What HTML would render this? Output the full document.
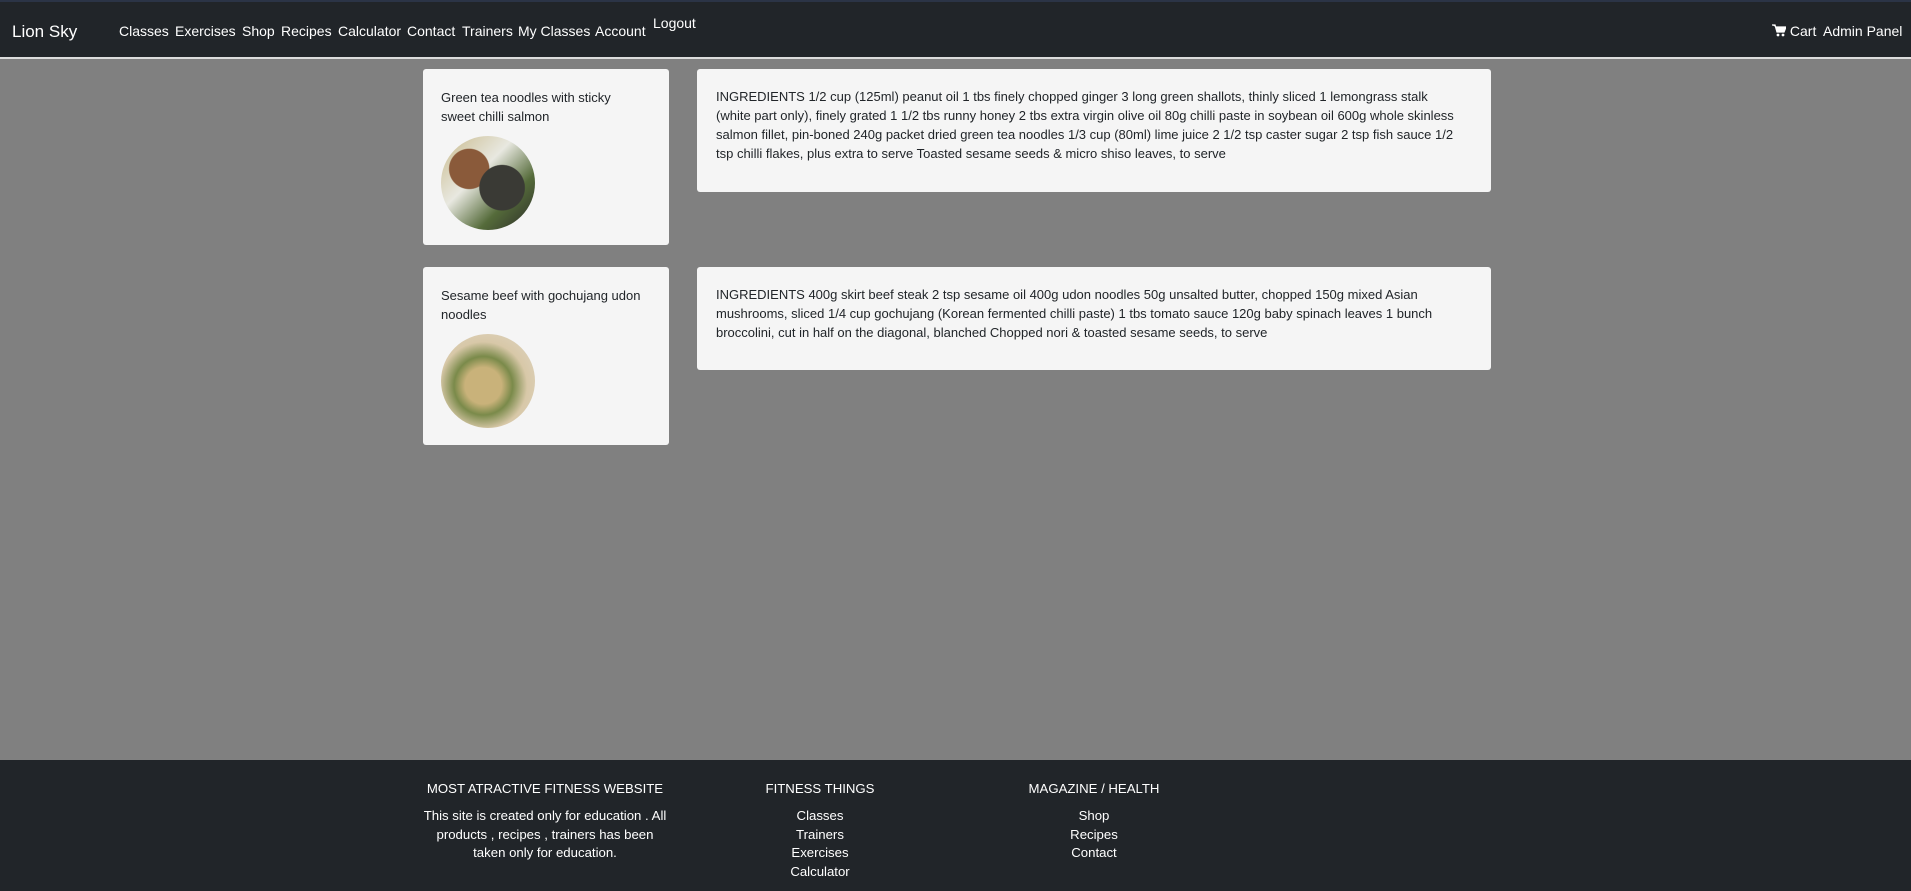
<!DOCTYPE html>
<html><head><meta charset="utf-8"><style>
*{box-sizing:border-box;margin:0;padding:0}
body{width:1911px;height:891px;overflow:hidden;background:#808080;font-family:"Liberation Sans",sans-serif;position:relative}
.nav{position:absolute;left:0;top:0;width:1911px;height:59px;background:#212529;border-top:2px solid #2b3446;border-bottom:2px solid #dcdcdc}
.nav a{position:absolute;color:#fff;font-size:14px;white-space:nowrap}
.card{position:absolute;background:#f5f5f5;border-radius:3px;font-size:13px;line-height:19px;color:#212529;white-space:nowrap}
.img{width:94px;height:94px;border-radius:50%;margin-top:10px}
.foot{position:absolute;left:0;top:760px;width:1911px;height:131px;background:#212529;color:#fff;font-size:13.2px;text-align:center}
.col{position:absolute;top:21px}
.col h5{font-weight:normal;font-size:13.2px;margin-bottom:11px}
.col p{line-height:18.5px}
</style></head><body>
<div class="nav">
<a style="left:12px;top:20px;font-size:17px">Lion Sky</a>
<a style="left:119px;top:21px">Classes</a>
<a style="left:175px;top:21px">Exercises</a>
<a style="left:242px;top:21px">Shop</a>
<a style="left:281px;top:21px">Recipes</a>
<a style="left:338px;top:21px">Calculator</a>
<a style="left:407px;top:21px">Contact</a>
<a style="left:462px;top:21px">Trainers</a>
<a style="left:518px;top:21px">My Classes</a>
<a style="left:595px;top:21px">Account</a>
<a style="left:653px;top:13px">Logout</a>
<a style="left:1772px;top:21px"><svg width="14" height="13" viewBox="0 0 14 13" style="vertical-align:-1px"><path d="M0 1h3l2 7h7l2-5H4" fill="#fff" stroke="#fff" stroke-width="1.3"/><circle cx="6" cy="11" r="1.4" fill="#fff"/><circle cx="11" cy="11" r="1.4" fill="#fff"/></svg> Cart</a>
<a style="left:1823px;top:21px">Admin Panel</a>
</div>

<div class="card" style="left:423px;top:69px;width:246px;height:176px;padding:19px 18px">Green tea noodles with sticky<br>sweet chilli salmon
<div class="img" style="background:radial-gradient(circle at 65% 55%,#3a3a35 0 28%,transparent 29%),radial-gradient(circle at 30% 35%,#8a5a3a 0 22%,transparent 23%),linear-gradient(135deg,#c8b98a,#e8e8e0 40%,#556b3a 70%,#2a2a28)"></div></div>
<div class="card" style="left:697px;top:69px;width:794px;height:123px;padding:18px 19px">INGREDIENTS 1/2 cup (125ml) peanut oil 1 tbs finely chopped ginger 3 long green shallots, thinly sliced 1 lemongrass stalk<br>(white part only), finely grated 1 1/2 tbs runny honey 2 tbs extra virgin olive oil 80g chilli paste in soybean oil 600g whole skinless<br>salmon fillet, pin-boned 240g packet dried green tea noodles 1/3 cup (80ml) lime juice 2 1/2 tsp caster sugar 2 tsp fish sauce 1/2<br>tsp chilli flakes, plus extra to serve Toasted sesame seeds &amp; micro shiso leaves, to serve</div>

<div class="card" style="left:423px;top:267px;width:246px;height:178px;padding:19px 18px">Sesame beef with gochujang udon<br>noodles
<div class="img" style="background:radial-gradient(circle at 45% 55%,#c9b27a 0 25%,#7a8a4a 40%,#d8c8a8 60%,#e0d8c8)"></div></div>
<div class="card" style="left:697px;top:267px;width:794px;height:103px;padding:18px 19px">INGREDIENTS 400g skirt beef steak 2 tsp sesame oil 400g udon noodles 50g unsalted butter, chopped 150g mixed Asian<br>mushrooms, sliced 1/4 cup gochujang (Korean fermented chilli paste) 1 tbs tomato sauce 120g baby spinach leaves 1 bunch<br>broccolini, cut in half on the diagonal, blanched Chopped nori &amp; toasted sesame seeds, to serve</div>

<div class="foot">
<div class="col" style="left:420px;width:250px"><h5>MOST ATRACTIVE FITNESS WEBSITE</h5><p>This site is created only for education . All products , recipes , trainers has been taken only for education.</p></div>
<div class="col" style="left:720px;width:200px"><h5>FITNESS THINGS</h5><p>Classes<br>Trainers<br>Exercises<br>Calculator</p></div>
<div class="col" style="left:994px;width:200px"><h5>MAGAZINE / HEALTH</h5><p>Shop<br>Recipes<br>Contact</p></div>
</div>
</body></html>
